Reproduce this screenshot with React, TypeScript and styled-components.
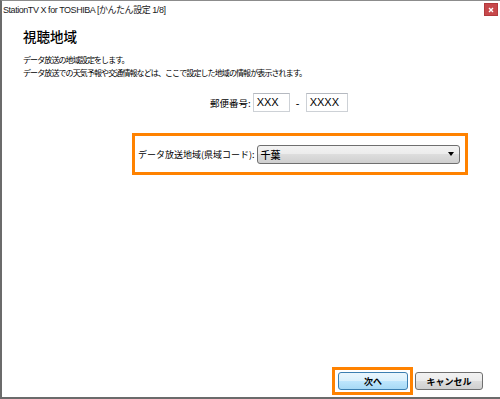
import React from 'react';
import styled, { createGlobalStyle } from 'styled-components';

const GlobalStyle = createGlobalStyle`
  html, body {
    margin: 0;
    padding: 0;
    background: #ffffff;
  }
  * {
    box-sizing: border-box;
  }
`;

const JP = `"Noto Sans CJK JP", sans-serif`;
const UI = `"Liberation Sans", "Noto Sans CJK JP", sans-serif`;

const Window = styled.div`
  width: 500px;
  height: 399px;
  display: flex;
  flex-direction: column;
  background: #ffffff;
  border-top: 1px solid #8c8c8c;
  border-left: 2px solid #6b6b6b;
  border-bottom: 2px solid #6b6b6b;
  font-family: ${JP};
  color: #000;
`;

const TitleBar = styled.div`
  height: 19px;
  display: flex;
  align-items: flex-start;
  justify-content: space-between;
  padding-left: 1px;
`;

const TitleText = styled.span`
  font-family: ${UI};
  font-size: 9px;
  letter-spacing: -0.45px;
  line-height: 19px;
  color: #1a1a1a;
`;

const CloseButton = styled.div`
  width: 14px;
  height: 13px;
  margin-top: 2px;
  margin-right: 2px;
  background: #c7484b;
  border: 1px solid #b23a3d;
  display: flex;
  align-items: center;
  justify-content: center;
`;

const Content = styled.div`
  flex: 1;
  display: flex;
  flex-direction: column;
  padding-left: 21px;
`;

const Heading = styled.h1`
  margin: 7px 0 0;
  font-size: 13.5px;
  line-height: 18px;
  font-weight: 500;
`;

const Description = styled.p`
  margin: 8px 0 0;
  font-size: 8px;
  line-height: 13px;
  letter-spacing: -0.9px;
`;

const PostalRow = styled.div`
  margin: 14px 0 0 187px;
  display: flex;
  align-items: center;
  height: 19px;
`;

const Label = styled.span<{ $size?: number }>`
  font-size: ${(p) => p.$size ?? 9}px;
  white-space: nowrap;
  margin-right: 2px;
`;

const TextInput = styled.div<{ $w: number }>`
  width: ${(p) => p.$w}px;
  height: 19px;
  border: 1px solid #cdd1d6;
  border-top-color: #b5b9c0;
  padding-left: 3px;
  font-family: "Liberation Sans", Arial, sans-serif;
  font-size: 11px;
  line-height: 17px;
`;

const Dash = styled.span`
  flex: 0 0 16px;
  text-align: center;
  font-size: 11px;
  font-family: "Liberation Sans", Arial, sans-serif;
`;

const Highlight = styled.div`
  border: 3px solid #ff8200;
`;

const RegionBox = styled(Highlight)`
  margin: 21px 0 0 109px;
  width: 336px;
  height: 42px;
  display: flex;
  align-items: center;
  padding: 0 5px 0 3px;
`;

const Select = styled.div`
  flex: 1;
  height: 19px;
  border: 1px solid #6f6f6f;
  border-radius: 3px;
  background: linear-gradient(#f3f3f3 0%, #ebebeb 50%, #dddddd 50%, #cfcfcf 100%);
  display: flex;
  align-items: center;
  justify-content: space-between;
  padding: 0 5px 0 3px;
  font-size: 10px;
  font-weight: 500;
`;

const Arrow = styled.span`
  width: 0;
  height: 0;
  border-left: 3px solid transparent;
  border-right: 3px solid transparent;
  border-top: 4px solid #000;
`;

const Footer = styled.div`
  display: flex;
  justify-content: flex-end;
  align-items: center;
  gap: 2px;
  padding: 0 17px 2px 0;
`;

const FocusRing = styled(Highlight)`
  padding: 2px 2px 2px 3px;
`;

const Button = styled.div<{ $primary?: boolean }>`
  width: ${(p) => (p.$primary ? 70 : 68)}px;
  height: 18px;
  border-radius: 3px;
  border: 1px solid ${(p) => (p.$primary ? '#3c7fb1' : '#707070')};
  background: ${(p) =>
    p.$primary
      ? 'linear-gradient(#eaf6fd 0%, #d9f0fc 50%, #bee6fd 50%, #a7d9f5 100%)'
      : 'linear-gradient(#f2f2f2 0%, #ebebeb 50%, #dddddd 50%, #cfcfcf 100%)'};
  display: flex;
  align-items: center;
  justify-content: center;
  font-size: 9px;
  font-weight: 700;
`;

export default function App() {
  return (
    <>
      <GlobalStyle />
      <Window>
        <TitleBar>
          <TitleText>StationTV X for TOSHIBA [かんたん設定 1/8]</TitleText>
          <CloseButton>
            <svg width="6" height="6" viewBox="0 0 6 6">
              <path d="M1 1L5 5M5 1L1 5" stroke="#fff" strokeWidth="1.4" />
            </svg>
          </CloseButton>
        </TitleBar>
        <Content>
          <Heading>視聴地域</Heading>
          <Description>
            データ放送の地域設定をします。
            <br />
            データ放送での天気予報や交通情報などは、ここで設定した地域の情報が表示されます。
          </Description>
          <PostalRow>
            <Label $size={9.5}>郵便番号:</Label>
            <TextInput $w={37}>XXX</TextInput>
            <Dash>-</Dash>
            <TextInput $w={42}>XXXX</TextInput>
          </PostalRow>
          <RegionBox>
            <Label>データ放送地域(県域コード):</Label>
            <Select>
              <span>千葉</span>
              <Arrow />
            </Select>
          </RegionBox>
        </Content>
        <Footer>
          <FocusRing>
            <Button $primary>次へ</Button>
          </FocusRing>
          <Button>キャンセル</Button>
        </Footer>
      </Window>
    </>
  );
}
